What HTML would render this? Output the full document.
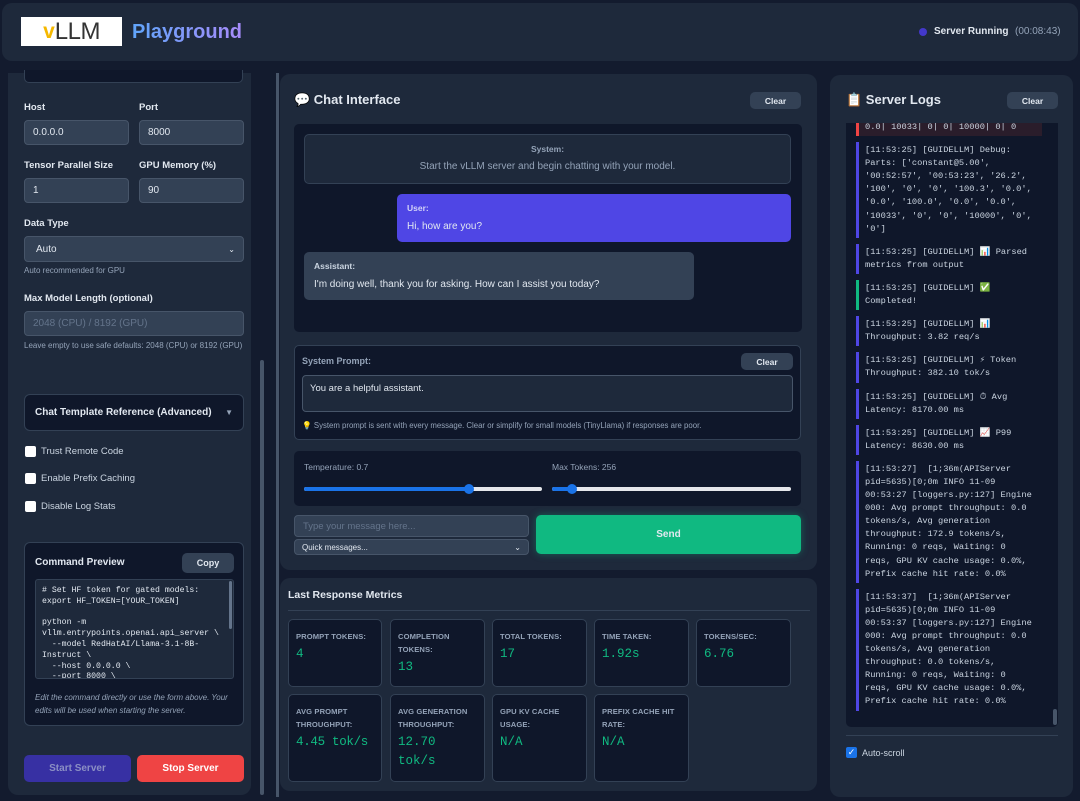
<!DOCTYPE html><html><head><meta charset="utf-8"><style>
*{box-sizing:border-box;margin:0;padding:0}
body{width:1080px;height:801px;background:#131b2e;font-family:"Liberation Sans",sans-serif;color:#e2e8f0;position:relative;overflow:hidden}
.a{position:absolute}
.p{background:#1e293b;border-radius:10px}
.lbl{font-size:9.5px;font-weight:bold;color:#e2e8f0}
.inp{background:#334155;border:1px solid #475569;border-radius:4px;font-size:10px;color:#e2e8f0;padding:0 8px;display:flex;align-items:center}
.hint{font-size:8px;color:#94a3b8}
.btn{background:#334155;border-radius:5px;font-size:9px;font-weight:bold;color:#e2e8f0;display:flex;align-items:center;justify-content:center}
.cb{width:11px;height:11px;background:#fff;border-radius:2px}
.mono{font-family:"Liberation Mono","DejaVu Sans Mono",monospace}
.card{background:#0f172a;border:1px solid #334155;border-radius:5px;padding:10px 7px}
.card .t{font-size:7.6px;font-weight:bold;color:#94a3b8;letter-spacing:.1px;line-height:13px;white-space:nowrap}
.card .v{font-family:"Liberation Mono",monospace;font-size:12.5px;color:#10b981;line-height:19px;margin-top:2px;white-space:nowrap}
.log{border-left:3px solid #4f46e5;padding:2px 0 2px 6px;margin-bottom:6px;font-family:"Liberation Mono",monospace;font-size:8.7px;line-height:13.1px;color:#cbd5e1;white-space:pre}
</style></head><body>
<!-- header -->
<div class="a p" style="left:2px;top:3px;width:1076px;height:58px"></div>
<div class="a" style="left:21px;top:17px;width:101px;height:29px;background:#fff;font-size:24px;color:#333;display:flex;align-items:center;justify-content:center;line-height:1"><span style="color:#f5b800;font-weight:bold;font-size:21px">v</span><span style="letter-spacing:-0.5px">LLM</span></div>
<div class="a" style="left:132px;top:21px;font-size:20px;font-weight:bold;background:linear-gradient(90deg,#60a5fa,#a78bfa);-webkit-background-clip:text;color:transparent">Playground</div>
<div class="a" style="left:919px;top:28px;width:8px;height:8px;border-radius:50%;background:#4338ca"></div>
<div class="a" style="left:934px;top:26px;font-size:10px;font-weight:bold">Server Running</div>
<div class="a" style="left:1015px;top:26px;font-size:10px;color:#94a3b8">(00:08:43)</div>

<!-- left -->
<div class="a p" style="left:8px;top:73px;width:243px;height:722px;border-radius:0 0 10px 10px"></div>
<div class="a" style="left:24px;top:70px;width:219px;height:13px;background:#0f172a;border:1px solid #334155;border-top:none;border-radius:0 0 5px 5px"></div>
<div class="a lbl" style="left:24px;top:102px">Host</div><div class="a lbl" style="left:139px;top:102px">Port</div>
<div class="a inp" style="left:24px;top:120px;width:105px;height:25px">0.0.0.0</div>
<div class="a inp" style="left:139px;top:120px;width:105px;height:25px">8000</div>
<div class="a lbl" style="left:24px;top:160px">Tensor Parallel Size</div><div class="a lbl" style="left:139px;top:160px">GPU Memory (%)</div>
<div class="a inp" style="left:24px;top:178px;width:105px;height:25px">1</div>
<div class="a inp" style="left:139px;top:178px;width:105px;height:25px">90</div>
<div class="a lbl" style="left:24px;top:218px">Data Type</div>
<div class="a inp" style="left:24px;top:236px;width:220px;height:26px;padding-left:11px">Auto<span style="margin-left:auto;font-size:8px">&#8964;</span></div>
<div class="a hint" style="left:24px;top:266px">Auto recommended for GPU</div>
<div class="a lbl" style="left:24px;top:293px">Max Model Length (optional)</div>
<div class="a inp" style="left:24px;top:311px;width:220px;height:25px;color:#64748b">2048 (CPU) / 8192 (GPU)</div>
<div class="a hint" style="left:24px;top:340px;width:225px;line-height:12px">Leave empty to use safe defaults: 2048 (CPU) or 8192 (GPU)</div>
<div class="a" style="left:24px;top:394px;width:220px;height:37px;background:#0f172a;border:1px solid #334155;border-radius:6px;display:flex;align-items:center;padding:0 10px;font-size:10px;font-weight:bold">Chat Template Reference (Advanced)<span style="margin-left:auto;font-size:8px;color:#94a3b8">▼</span></div>
<div class="a cb" style="left:25px;top:446px"></div><div class="a" style="left:41px;top:446px;font-size:9.5px;color:#cbd5e1">Trust Remote Code</div>
<div class="a cb" style="left:25px;top:473px"></div><div class="a" style="left:41px;top:473px;font-size:9.5px;color:#cbd5e1">Enable Prefix Caching</div>
<div class="a cb" style="left:25px;top:501px"></div><div class="a" style="left:41px;top:501px;font-size:9.5px;color:#cbd5e1">Disable Log Stats</div>
<div class="a" style="left:24px;top:542px;width:220px;height:184px;background:#0f172a;border:1px solid #334155;border-radius:6px"></div>
<div class="a lbl" style="left:35px;top:557px;font-size:10px">Command Preview</div>
<div class="a btn" style="left:182px;top:553px;width:52px;height:20px">Copy</div>
<div class="a mono" style="left:35px;top:579px;width:199px;height:100px;background:#1e293b;border:1px solid #334155;border-radius:3px;padding:6px 6px;font-size:8.2px;line-height:10.8px;color:#e2e8f0;white-space:pre;overflow:hidden"># Set HF token for gated models:
export HF_TOKEN=[YOUR_TOKEN]

python -m
vllm.entrypoints.openai.api_server \
  --model RedHatAI/Llama-3.1-8B-
Instruct \
  --host 0.0.0.0 \
  --port 8000 \</div>
<div class="a" style="left:229px;top:581px;width:3px;height:48px;background:#64748b;border-radius:2px"></div>
<div class="a" style="left:35px;top:692px;width:205px;font-size:8px;font-style:italic;color:#94a3b8;line-height:12.5px">Edit the command directly or use the form above. Your edits will be used when starting the server.</div>
<div class="a btn" style="left:24px;top:755px;width:107px;height:27px;background:#3730a3;color:#8b8fc4;font-size:10px">Start Server</div>
<div class="a btn" style="left:137px;top:755px;width:107px;height:27px;background:#ef4444;color:#fff;font-size:10px">Stop Server</div>
<div class="a" style="left:260px;top:360px;width:4px;height:435px;background:#475569;border-radius:2px"></div>
<div class="a" style="left:276px;top:73px;width:3px;height:724px;background:#475569"></div>

<!-- middle -->
<div class="a p" style="left:280px;top:74px;width:537px;height:496px"></div>
<div class="a" style="left:294px;top:92px;font-size:13px;font-weight:bold">💬 Chat Interface</div>
<div class="a btn" style="left:750px;top:92px;width:51px;height:17px;font-size:8.5px">Clear</div>
<div class="a" style="left:294px;top:124px;width:508px;height:208px;background:#0f172a;border-radius:5px"></div>
<div class="a" style="left:304px;top:134px;width:487px;height:50px;border:1px solid #334155;background:#1e293b;border-radius:5px;text-align:center">
<div style="font-size:8.5px;font-weight:bold;color:#94a3b8;margin-top:9px">System:</div>
<div style="font-size:10px;color:#94a3b8;margin-top:7px">Start the vLLM server and begin chatting with your model.</div></div>
<div class="a" style="left:397px;top:194px;width:394px;height:48px;background:#4f46e5;border-radius:5px;padding:9px 10px">
<div style="font-size:8.5px;font-weight:bold;color:#d4d4f8">User:</div><div style="font-size:10px;margin-top:8px">Hi, how are you?</div></div>
<div class="a" style="left:304px;top:252px;width:390px;height:48px;background:#334155;border-radius:5px;padding:9px 10px">
<div style="font-size:8.5px;font-weight:bold;color:#cbd5e1">Assistant:</div><div style="font-size:10px;margin-top:8px">I'm doing well, thank you for asking. How can I assist you today?</div></div>
<div class="a" style="left:294px;top:345px;width:507px;height:95px;background:#0f172a;border:1px solid #334155;border-radius:5px"></div>
<div class="a" style="left:302px;top:356px;font-size:9px;color:#94a3b8;font-weight:bold">System Prompt:</div>
<div class="a btn" style="left:741px;top:353px;width:52px;height:17px;font-size:8.5px">Clear</div>
<div class="a" style="left:302px;top:375px;width:491px;height:37px;background:#1e293b;border:1px solid #475569;border-radius:4px;padding:7px 7px;font-size:9.5px">You are a helpful assistant.</div>
<div class="a" style="left:302px;top:421px;font-size:7.8px;color:#94a3b8">💡 System prompt is sent with every message. Clear or simplify for small models (TinyLlama) if responses are poor.</div>
<div class="a" style="left:294px;top:451px;width:507px;height:55px;background:#0f172a;border-radius:5px"></div>
<div class="a" style="left:304px;top:462px;font-size:8.5px;color:#94a3b8">Temperature: 0.7</div>
<div class="a" style="left:552px;top:462px;font-size:8.5px;color:#94a3b8">Max Tokens: 256</div>
<div class="a" style="left:304px;top:487px;width:238px;height:4px;background:#e5e7eb;border-radius:2px"></div>
<div class="a" style="left:304px;top:487px;width:165px;height:4px;background:#1a73e8;border-radius:2px"></div>
<div class="a" style="left:464px;top:484px;width:10px;height:10px;background:#1a73e8;border-radius:50%"></div>
<div class="a" style="left:552px;top:487px;width:239px;height:4px;background:#e5e7eb;border-radius:2px"></div>
<div class="a" style="left:552px;top:487px;width:20px;height:4px;background:#1a73e8;border-radius:2px"></div>
<div class="a" style="left:567px;top:484px;width:10px;height:10px;background:#1a73e8;border-radius:50%"></div>
<div class="a inp" style="left:294px;top:515px;width:235px;height:22px;color:#64748b;font-size:9.5px">Type your message here...</div>
<div class="a inp" style="left:294px;top:539px;width:235px;height:16px;font-size:8px;padding:0 7px">Quick messages...<span style="margin-left:auto">&#8964;</span></div>
<div class="a" style="left:536px;top:515px;width:265px;height:39px;background:#10b981;border-radius:5px;box-shadow:0 0 8px rgba(16,185,129,.4);display:flex;align-items:center;justify-content:center;font-size:10px;font-weight:bold">Send</div>

<!-- metrics -->
<div class="a p" style="left:280px;top:578px;width:537px;height:213px"></div>
<div class="a" style="left:288px;top:589px;font-size:10.5px;font-weight:bold">Last Response Metrics</div>
<div class="a" style="left:288px;top:610px;width:522px;height:1px;background:#334155"></div>
<div class="a card" style="left:288px;top:619px;width:94px;height:68px"><div class="t">PROMPT TOKENS:</div><div class="v">4</div></div>
<div class="a card" style="left:390px;top:619px;width:95px;height:68px"><div class="t">COMPLETION<br>TOKENS:</div><div class="v">13</div></div>
<div class="a card" style="left:492px;top:619px;width:95px;height:68px"><div class="t">TOTAL TOKENS:</div><div class="v">17</div></div>
<div class="a card" style="left:594px;top:619px;width:95px;height:68px"><div class="t">TIME TAKEN:</div><div class="v">1.92s</div></div>
<div class="a card" style="left:696px;top:619px;width:95px;height:68px"><div class="t">TOKENS/SEC:</div><div class="v">6.76</div></div>
<div class="a card" style="left:288px;top:694px;width:94px;height:88px"><div class="t">AVG PROMPT<br>THROUGHPUT:</div><div class="v" style="letter-spacing:-0.3px">4.45 tok/s</div></div>
<div class="a card" style="left:390px;top:694px;width:95px;height:88px"><div class="t">AVG GENERATION<br>THROUGHPUT:</div><div class="v">12.70<br>tok/s</div></div>
<div class="a card" style="left:492px;top:694px;width:95px;height:88px"><div class="t">GPU KV CACHE<br>USAGE:</div><div class="v">N/A</div></div>
<div class="a card" style="left:594px;top:694px;width:95px;height:88px"><div class="t">PREFIX CACHE HIT<br>RATE:</div><div class="v">N/A</div></div>

<!-- right -->
<div class="a p" style="left:830px;top:75px;width:243px;height:722px"></div>
<div class="a" style="left:846px;top:92px;font-size:13px;font-weight:bold">📋 Server Logs</div>
<div class="a btn" style="left:1007px;top:92px;width:51px;height:17px;font-size:8.5px">Clear</div>
<div class="a" style="left:846px;top:123px;width:212px;height:604px;background:#0f172a;border-radius:0 0 5px 5px;overflow:hidden;padding:0 0 0 10px">
<div class="log" style="border-color:#ef4444;background:#2a1d2b;margin-top:-2px;padding-top:0;width:186px">0.0| 10033| 0| 0| 10000| 0| 0</div>
<div class="log">[11:53:25] [GUIDELLM] Debug:
Parts: ['constant@5.00',
'00:52:57', '00:53:23', '26.2',
'100', '0', '0', '100.3', '0.0',
'0.0', '100.0', '0.0', '0.0',
'10033', '0', '0', '10000', '0',
'0']</div>
<div class="log">[11:53:25] [GUIDELLM] 📊 Parsed
metrics from output</div>
<div class="log" style="border-color:#10b981">[11:53:25] [GUIDELLM] ✅
Completed!</div>
<div class="log">[11:53:25] [GUIDELLM] 📊
Throughput: 3.82 req/s</div>
<div class="log">[11:53:25] [GUIDELLM] ⚡ Token
Throughput: 382.10 tok/s</div>
<div class="log">[11:53:25] [GUIDELLM] ⏱ Avg
Latency: 8170.00 ms</div>
<div class="log">[11:53:25] [GUIDELLM] 📈 P99
Latency: 8630.00 ms</div>
<div class="log">[11:53:27]  [1;36m(APIServer
pid=5635)[0;0m INFO 11-09
00:53:27 [loggers.py:127] Engine
000: Avg prompt throughput: 0.0
tokens/s, Avg generation
throughput: 172.9 tokens/s,
Running: 0 reqs, Waiting: 0
reqs, GPU KV cache usage: 0.0%,
Prefix cache hit rate: 0.0%</div>
<div class="log">[11:53:37]  [1;36m(APIServer
pid=5635)[0;0m INFO 11-09
00:53:37 [loggers.py:127] Engine
000: Avg prompt throughput: 0.0
tokens/s, Avg generation
throughput: 0.0 tokens/s,
Running: 0 reqs, Waiting: 0
reqs, GPU KV cache usage: 0.0%,
Prefix cache hit rate: 0.0%</div>
</div>
<div class="a" style="left:1053px;top:709px;width:4px;height:16px;background:#475569;border-radius:2px"></div>
<div class="a" style="left:846px;top:735px;width:212px;height:1px;background:#334155"></div>
<div class="a" style="left:846px;top:747px;width:11px;height:11px;background:#1a73e8;border-radius:2px;color:#fff;font-size:9px;line-height:11px;text-align:center">✓</div>
<div class="a" style="left:862px;top:748px;font-size:9px;color:#cbd5e1">Auto-scroll</div>
</body></html>
